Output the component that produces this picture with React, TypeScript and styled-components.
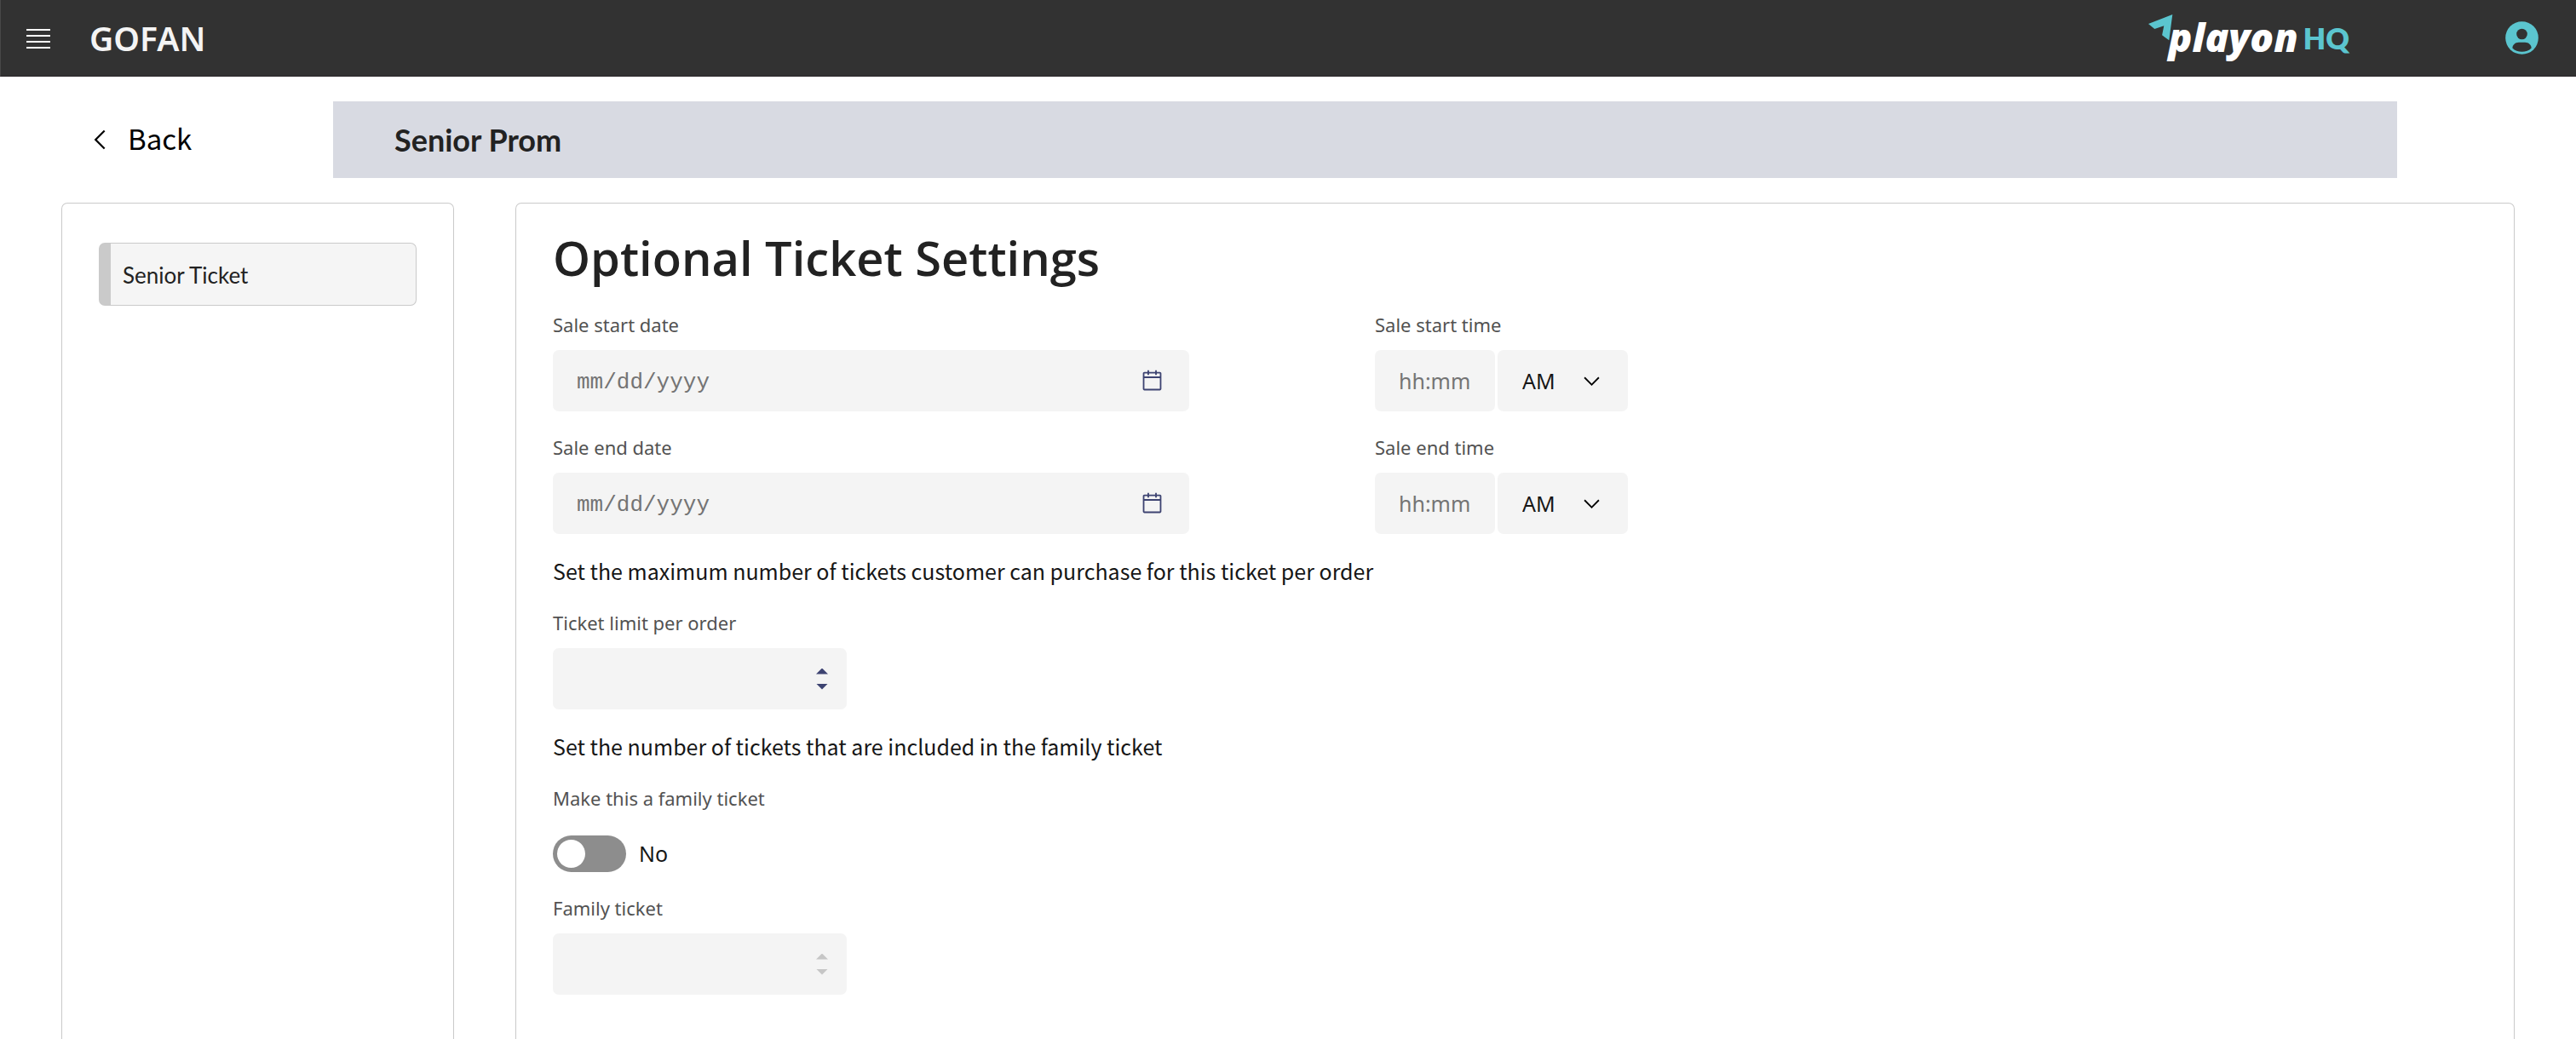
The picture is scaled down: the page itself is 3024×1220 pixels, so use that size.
import React, { useId, useRef, useState } from 'react';
import styled, { createGlobalStyle } from 'styled-components';

const fonts = {
  label: '"Noto Sans", sans-serif',
  body: '"Noto Sans CJK JP", "Noto Sans", sans-serif',
  heading: '"Open Sans", "Noto Sans", sans-serif',
  accent: 'Lato, sans-serif',
  mono: '"Liberation Mono", monospace',
};

const colors = {
  header: '#323232',
  headerText: '#f4f4f4',
  teal: '#5bc5cf',
  text: '#161616',
  heading: '#222222',
  label: '#525252',
  placeholder: '#747474',
  field: '#f4f4f4',
  border: '#cacaca',
  banner: '#d8dae2',
  indigo: '#3d4371',
  disabled: '#c6c6c6',
  toggle: '#8d8d8d',
};

const GlobalStyle = createGlobalStyle`
  *, *::before, *::after { box-sizing: border-box; }
  body { margin: 0; background: #ffffff; color: ${colors.text}; font-family: ${fonts.body}; }
  button, input, select { margin: 0; border: 0; padding: 0; font: inherit; color: inherit; background: none; }
  h1, h2, p { margin: 0; }
`;

const Page = styled.div`
  display: flex;
  flex-direction: column;
  min-height: 100vh;
`;

/* Header */

const Header = styled.header`
  display: flex;
  align-items: center;
  height: 90px;
  padding: 0 44px 0 30px;
  background: ${colors.header};
  border-bottom: 1px solid #2b272a;
  border-left: 1px solid #484848;
`;

const IconButton = styled.button`
  display: flex;
  cursor: pointer;
`;

const Brand = styled.a`
  margin-left: 46px;
  color: ${colors.headerText};
  font: 600 39px/56px ${fonts.label};
  text-decoration: none;
`;

const Logo = styled.div`
  display: flex;
  align-items: center;
  margin-left: auto;
  margin-right: 183px;
  white-space: nowrap;
`;

const LogoArrow = styled.svg`
  width: 29px;
  height: 31px;
  margin-bottom: 24px;
`;

const LogoWord = styled.span`
  margin-left: -5px;
  padding-bottom: 4px;
  color: #ffffff;
  font: italic 800 46px/56px ${fonts.heading};
`;

const LogoSuffix = styled.span`
  margin-left: 6px;
  color: ${colors.teal};
  font: 800 34px/56px ${fonts.accent};
`;

/* Title row */

const TitleRow = styled.div`
  display: flex;
  align-items: center;
  padding: 29px 210px 29px 99px;
`;

const BackLink = styled.a`
  display: flex;
  align-items: center;
  gap: 12px;
  width: 292px;
  flex-shrink: 0;
  color: #000000;
  font: 400 33px/48px ${fonts.body};
  text-decoration: none;
`;

const BackText = styled.span`
  padding-bottom: 4px;
`;

const Banner = styled.h1`
  flex: 1;
  padding: 22px 72px;
  background: ${colors.banner};
  color: ${colors.heading};
  font: 700 36px/46px ${fonts.accent};
`;

/* Panels */

const Columns = styled.main`
  display: flex;
  flex: 1;
  gap: 72px;
  padding: 0 72px;
`;

const Panel = styled.section`
  border: 1px solid ${colors.border};
  border-bottom: 0;
  border-radius: 7px 7px 0 0;
`;

const Sidebar = styled(Panel)`
  width: 461px;
  flex-shrink: 0;
  padding: 46px 43px;
`;

const Content = styled(Panel)`
  flex: 1;
  padding: 27px 43px 50px;
`;

const TicketItem = styled.button`
  display: block;
  width: 100%;
  padding: 19px 14px 17px;
  border: 1px solid ${colors.border};
  border-left-width: 14px;
  border-radius: 7px;
  background: #f5f5f5;
  color: ${colors.heading};
  font: 400 26px/36px ${fonts.accent};
  text-align: left;
  cursor: pointer;
`;

const Heading = styled.h2`
  margin-bottom: 29px;
  color: ${colors.heading};
  font: 600 56px/72px ${fonts.heading};
`;

/* Form */

const FieldGrid = styled.div`
  display: grid;
  grid-template-columns: minmax(0, 747px) auto;
  justify-content: start;
  gap: 28px 218px;
`;

const Field = styled.div`
  display: flex;
  flex-direction: column;
  align-items: flex-start;
  gap: 16px;
`;

const Label = styled.label`
  color: ${colors.label};
  font: 400 22px/28px ${fonts.label};
`;

const Box = styled.div<{ $width: string }>`
  display: flex;
  align-items: center;
  width: ${(p) => p.$width};
  height: 72px;
  border-radius: 7px;
  background: ${colors.field};
`;

const TextInput = styled.input<{ $mono?: boolean }>`
  flex: 1;
  min-width: 0;
  height: 100%;
  padding: ${(p) => (p.$mono ? '4px' : '0')} 0 0 28px;
  font: 400 ${(p) => (p.$mono ? `26px ${fonts.mono}` : `25px ${fonts.label}`)};
  appearance: textfield;

  &::placeholder { color: ${colors.placeholder}; opacity: 1; }
  &::-webkit-inner-spin-button { appearance: none; }
`;

const CalendarButton = styled(IconButton)`
  margin-right: 29px;
  color: ${colors.indigo};
`;

const TimeRow = styled.div`
  display: flex;
  gap: 3px;
`;

const SelectBox = styled(Box)`
  position: relative;
`;

const Select = styled.select`
  width: 100%;
  height: 100%;
  padding: 0 58px 0 29px;
  appearance: none;
  font: 400 25px ${fonts.label};
`;

const SelectArrow = styled.svg`
  position: absolute;
  right: 28px;
  pointer-events: none;
`;

const Spinner = styled.div`
  display: flex;
  flex-direction: column;
  gap: 11px;
  margin-right: 22px;
`;

const SpinButton = styled.button<{ $down?: boolean }>`
  width: 14px;
  height: 7px;
  background: ${colors.indigo};
  clip-path: ${(p) => (p.$down ? 'polygon(0 0, 100% 0, 50% 100%)' : 'polygon(50% 0, 100% 100%, 0 100%)')};

  &:disabled { background: ${colors.disabled}; }
`;

const Section = styled.div`
  margin-top: 25px;
`;

const Note = styled.p`
  margin-bottom: 29px;
  font: 400 25px/36px ${fonts.body};
`;

const ToggleField = styled.div`
  display: flex;
  flex-direction: column;
  gap: 30px;
  margin-bottom: 28px;
`;

const ToggleRow = styled.div`
  display: flex;
  align-items: center;
  gap: 15px;
  font: 400 25px/43px ${fonts.label};
`;

const Toggle = styled.input`
  appearance: none;
  width: 86px;
  height: 43px;
  padding: 5px;
  border-radius: 22px;
  background: ${colors.toggle};
  cursor: pointer;

  &::before {
    content: '';
    display: block;
    width: 33px;
    height: 33px;
    border-radius: 50%;
    background: #ffffff;
  }
  &:checked { background: #24a148; }
  &:checked::before { margin-left: auto; }
`;

const MenuIcon = () => (
  <svg width="28" height="24" viewBox="0 0 28 24" fill="#ffffff" aria-hidden="true">
    <rect y="1" width="28" height="2" />
    <rect y="8" width="28" height="2" />
    <rect y="15" width="28" height="2" />
    <rect y="22" width="28" height="2" />
  </svg>
);

const AvatarIcon = () => (
  <svg width="39" height="39" viewBox="0 0 39 39" aria-hidden="true">
    <circle cx="19.5" cy="19.5" r="19.3" fill={colors.teal} />
    <g fill={colors.header}>
      <circle cx="19.5" cy="15" r="6.3" />
      <path d="M8.4 31.4C8.4 27.6 11.8 24.7 15.8 24.7h7.4c4 0 7.4 2.9 7.4 6.7-2.8 3-6.8 4.3-11.1 4.3s-8.3-1.3-11.1-4.3z" />
    </g>
  </svg>
);

const BackIcon = () => (
  <svg width="39" height="36" viewBox="0 0 17 16" aria-hidden="true">
    <path d="M5 8l5-5 .7.7L6.4 8l4.3 4.3-.7.7z" />
  </svg>
);

const CalendarIcon = () => (
  <svg width="29" height="29" viewBox="0 0 32 32" fill="currentColor" aria-hidden="true">
    <path d="M26 4h-4V2h-2v2h-8V2h-2v2H6c-1.100 0-2 .9-2 2v20c0 1.100.9 2 2 2h20c1.100 0 2-.9 2-2V6c0-1.100-.9-2-2-2zm0 22H6V12h20v14zm0-16H6V6h4v2h2V6h8v2h2V6h4v4z" />
  </svg>
);

function DateField({ label }: { label: string }) {
  const id = useId();
  const ref = useRef<HTMLInputElement>(null);
  return (
    <Field>
      <Label htmlFor={id}>{label}</Label>
      <Box $width="100%">
        <TextInput ref={ref} id={id} type="text" placeholder="mm/dd/yyyy" $mono />
        <CalendarButton type="button" aria-label={`Choose ${label.toLowerCase()}`} onClick={() => ref.current?.focus()}>
          <CalendarIcon />
        </CalendarButton>
      </Box>
    </Field>
  );
}

function TimeField({ label }: { label: string }) {
  const id = useId();
  return (
    <Field>
      <Label htmlFor={id}>{label}</Label>
      <TimeRow>
        <Box $width="141px">
          <TextInput id={id} type="text" placeholder="hh:mm" />
        </Box>
        <SelectBox $width="153px">
          <Select aria-label={`${label} period`} defaultValue="AM">
            <option>AM</option>
            <option>PM</option>
          </Select>
          <SelectArrow width="29" height="29" viewBox="0 0 16 16" aria-hidden="true">
            <path d="M8 11L3 6l.7-.7L8 9.600l4.300-4.300.7.7z" />
          </SelectArrow>
        </SelectBox>
      </TimeRow>
    </Field>
  );
}

function NumberField({ label, disabled }: { label: string; disabled?: boolean }) {
  const id = useId();
  const ref = useRef<HTMLInputElement>(null);
  return (
    <Field>
      <Label htmlFor={id}>{label}</Label>
      <Box $width="345px">
        <TextInput ref={ref} id={id} type="number" min={0} disabled={disabled} />
        <Spinner>
          <SpinButton type="button" aria-label={`Increase ${label}`} disabled={disabled} onClick={() => ref.current?.stepUp()} />
          <SpinButton type="button" aria-label={`Decrease ${label}`} disabled={disabled} onClick={() => ref.current?.stepDown()} $down />
        </Spinner>
      </Box>
    </Field>
  );
}

export default function App() {
  const [family, setFamily] = useState(false);
  return (
    <Page>
      <GlobalStyle />
      <Header>
        <IconButton type="button" aria-label="Open menu">
          <MenuIcon />
        </IconButton>
        <Brand href="#">GOFAN</Brand>
        <Logo>
          <LogoArrow viewBox="0 0 29 31" aria-hidden="true">
            <path d="M0 11L28.300 0l-4 30.300-8.200-6 2.200-11-11 3.700z" fill={colors.teal} />
          </LogoArrow>
          <LogoWord>playon</LogoWord>
          <LogoSuffix>HQ</LogoSuffix>
        </Logo>
        <IconButton type="button" aria-label="Account">
          <AvatarIcon />
        </IconButton>
      </Header>

      <TitleRow>
        <BackLink href="#">
          <BackIcon />
          <BackText>Back</BackText>
        </BackLink>
        <Banner>Senior Prom</Banner>
      </TitleRow>

      <Columns>
        <Sidebar as="aside">
          <TicketItem type="button">Senior Ticket</TicketItem>
        </Sidebar>

        <Content>
          <Heading>Optional Ticket Settings</Heading>
          <FieldGrid>
            <DateField label="Sale start date" />
            <TimeField label="Sale start time" />
            <DateField label="Sale end date" />
            <TimeField label="Sale end time" />
          </FieldGrid>

          <Section>
            <Note>Set the maximum number of tickets customer can purchase for this ticket per order</Note>
            <NumberField label="Ticket limit per order" />
          </Section>

          <Section>
            <Note>Set the number of tickets that are included in the family ticket</Note>
            <ToggleField>
              <Label htmlFor="family-toggle">Make this a family ticket</Label>
              <ToggleRow>
                <Toggle
                  id="family-toggle"
                  type="checkbox"
                  role="switch"
                  checked={family}
                  onChange={(e) => setFamily(e.target.checked)}
                />
                {family ? 'Yes' : 'No'}
              </ToggleRow>
            </ToggleField>
            <NumberField label="Family ticket" disabled={!family} />
          </Section>
        </Content>
      </Columns>
    </Page>
  );
}
